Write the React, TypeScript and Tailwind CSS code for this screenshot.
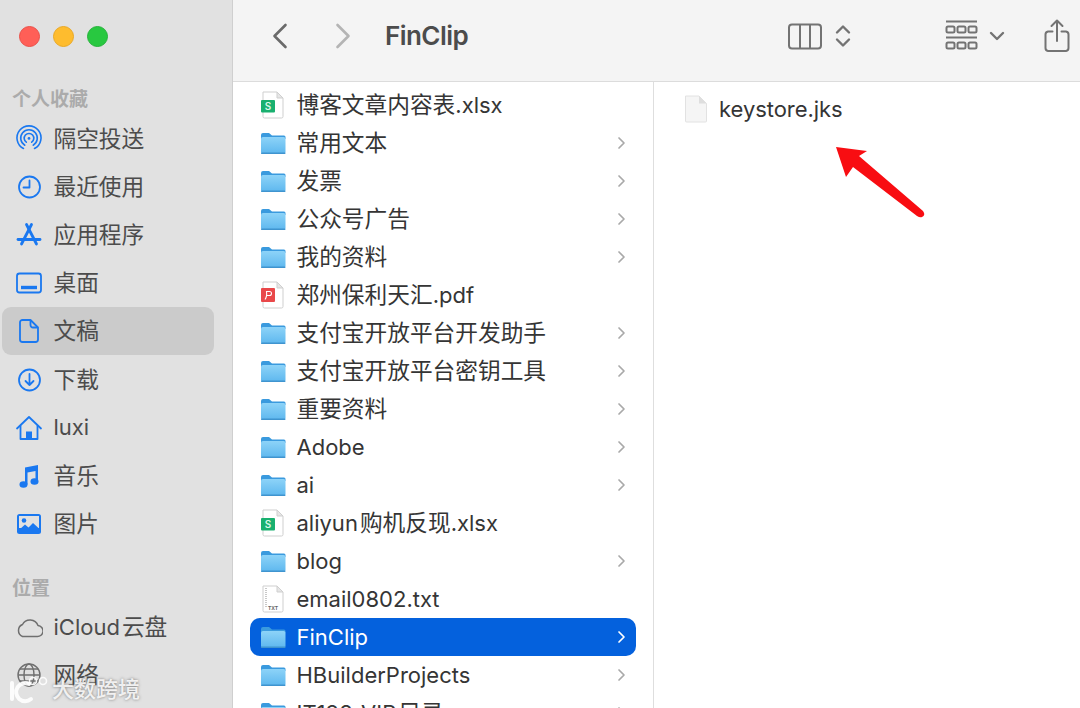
import React from "react";

const font = { fontFamily: '"Inter","Noto Sans CJK SC",sans-serif' };

const B = "#1a78f0";

function Txt({ s }: { s: string }) {
  const parts = s.split(/([\u4e00-\u9fff]+)/).filter(Boolean);
  return (
    <>
      {parts.map((p, i) =>
        /[\u4e00-\u9fff]/.test(p) ? (
          <span key={i} className={`text-[22.7px] ${i > 0 ? "ml-[2px]" : ""}`}>{p}</span>
        ) : (
          <span key={i}>{p}</span>
        )
      )}
    </>
  );
}

const sideIcons: Record<string, React.ReactNode> = {
  air: (
    <g fill="none" stroke={B} strokeWidth="1.6" strokeLinecap="round">
      <path d="M8.5 23.5A12 12 0 1 1 19.5 23.5" />
      <path d="M9.8 20.2A8.3 8.3 0 1 1 18.2 20.2" />
      <path d="M11.3 17.2A4.8 4.8 0 1 1 16.7 17.2" />
      <circle cx="14" cy="13.4" r="1.4" fill={B} stroke="none" />
    </g>
  ),
  clock: (
    <g fill="none" stroke={B} strokeWidth="1.8" strokeLinecap="round" strokeLinejoin="round">
      <circle cx="14.5" cy="14" r="10.5" />
      <path d="M14.5 7.5V14.5H8.5" />
    </g>
  ),
  app: (
    <g fill="none" stroke={B} strokeWidth="2.8" strokeLinecap="round" strokeLinejoin="round">
      <path d="M11.5 3.5L21.5 23" />
      <path d="M16.5 3.5L6.5 23" />
      <path d="M3 18.5H25" />
    </g>
  ),
  desk: (
    <g fill="none" stroke={B} strokeWidth="1.8">
      <rect x="2" y="4.5" width="24" height="19" rx="2.5" />
      <path d="M6 18.5H22" strokeWidth="3.4" />
    </g>
  ),
  doc: (
    <g fill="none" stroke={B} strokeWidth="1.8" strokeLinejoin="round">
      <path d="M7.5 3H15.5L23 10.500V22.500A2.500 2.500 0 0 1 20.500 25H7.500A2.500 2.500 0 0 1 5 22.500V5.500A2.500 2.500 0 0 1 7.500 3Z" />
      <path d="M15.500 3V8A2.500 2.500 0 0 0 18 10.500H23" />
    </g>
  ),
  down: (
    <g fill="none" stroke={B} strokeWidth="1.8" strokeLinecap="round" strokeLinejoin="round">
      <circle cx="14.500" cy="14" r="10.500" />
      <path d="M14.500 8V19M10.500 15L14.500 19L18.500 15" />
    </g>
  ),
  home: (
    <g fill="none" stroke={B} strokeWidth="1.800" strokeLinecap="round" strokeLinejoin="round">
      <path d="M2 14.500L14 3L26 14.500" />
      <path d="M5.500 12V25H22.500V12" />
      <rect x="11" y="17.500" width="6" height="7.500" fill={B} stroke="none" />
    </g>
  ),
  music: (
    <g fill={B}>
      <path d="M10 5.500L23 3V19H20.500V9L12.500 10.500V22.500H10Z" />
      <ellipse cx="8.500" cy="22.500" rx="4" ry="3.300" />
      <ellipse cx="19.500" cy="19.500" rx="4" ry="3.300" />
    </g>
  ),
  pic: (
    <g>
      <rect x="2" y="4" width="24" height="20" rx="2.500" fill={B} />
      <rect x="4" y="6" width="20" height="12" fill="#e1e1e1" />
      <circle cx="9" cy="10.500" r="2.300" fill={B} />
      <path d="M4 20L10 14.500L13.500 17.500L18 13L24 18.500V22H4Z" fill={B} />
    </g>
  ),
  cloud: (
    <path d="M7.500 23.500H22A5.500 5.500 0 0 0 23 12.500A8.500 8.500 0 0 0 7.500 11.500A6.500 6.500 0 0 0 7.500 23.500Z" fill="none" stroke="#6f6f6f" strokeWidth="1.500" strokeLinejoin="round" />
  ),
  globe: (
    <g fill="none" stroke="#6f6f6f" strokeWidth="1.400">
      <circle cx="14" cy="14" r="11" />
      <ellipse cx="14" cy="14" rx="5" ry="11" />
      <path d="M3 14H25M5 8H23M5 20H23" />
    </g>
  ),
};

function Side({ icon, label, active }: { icon: string; label: string; active?: boolean }) {
  return (
    <div className={`mx-[2px] flex h-[48.2px] w-[212px] items-center gap-[10.500px] rounded-[9px] pl-[13px] text-[22px] text-[#4c4c4c] ${active ? "bg-[#cbcbcb]" : ""}`}>
      <svg width="28" height="28" viewBox="0 0 28 28" className="shrink-0">{sideIcons[icon]}</svg>
      <span className="whitespace-nowrap"><Txt s={label} /></span>
    </div>
  );
}

function Folder({ id }: { id: string }) {
  return (
    <svg width="26" height="24" viewBox="0 0 26 24" className="shrink-0">
      <defs>
        <linearGradient id={id} x1="0" y1="0" x2="0" y2="1">
          <stop offset="0" stopColor="#8dd3f8" />
          <stop offset="1" stopColor="#5db7ee" />
        </linearGradient>
      </defs>
      <path d="M1 4A2 2 0 0 1 3 2H9L12 4.500H24A1.500 1.500 0 0 1 25.500 6V8H1Z" fill="#3a9ade" />
      <rect x="1" y="6" width="24.500" height="17" rx="2" fill={`url(#${id})`} />
      <rect x="1" y="21.500" width="24.500" height="1.500" rx=".7" fill="#3f94cf" />
    </svg>
  );
}

function PageShell({ children }: { children?: React.ReactNode }) {
  return (
    <svg width="26" height="28" viewBox="0 0 26 28" className="shrink-0">
      <path d="M3 1H17L23 7V25.500A1.500 1.500 0 0 1 21.500 27H4.500A1.500 1.500 0 0 1 3 25.500Z" fill="#fff" stroke="#cfcfcf" />
      <path d="M17 1V7H23Z" fill="#e6e6e6" stroke="#cfcfcf" strokeLinejoin="round" />
      {children}
    </svg>
  );
}

function FileIcon({ kind }: { kind: string }) {
  if (kind === "xlsx")
    return (
      <PageShell>
        <rect x="1" y="9" width="14" height="12.500" rx="1" fill="#19b06f" />
        <text x="8" y="19" textAnchor="middle" fontSize="10" fontWeight="600" fill="#d9f7e8" fontFamily="Inter">S</text>
      </PageShell>
    );
  if (kind === "pdf")
    return (
      <PageShell>
        <rect x="1" y="7" width="14" height="14" rx="1" fill="#e9484a" />
        <path d="M5 18.500C6.500 16.500 7 14 6.500 10.500H9.500A2 2 0 0 1 9.500 14.500H6.500" fill="none" stroke="#fff" strokeWidth="1.100" />
      </PageShell>
    );
  return (
    <PageShell>
      <path d="M6 3V22" stroke="#c8c8c8" strokeWidth="2" strokeDasharray="1 1" />
      <text x="13" y="25" textAnchor="middle" fontSize="5" fontWeight="700" fill="#666" fontFamily="Inter">TXT</text>
    </PageShell>
  );
}

const rows: [string, string][] = [
  ["博客文章内容表.xlsx", "xlsx"],
  ["常用文本", "folder"],
  ["发票", "folder"],
  ["公众号广告", "folder"],
  ["我的资料", "folder"],
  ["郑州保利天汇.pdf", "pdf"],
  ["支付宝开放平台开发助手", "folder"],
  ["支付宝开放平台密钥工具", "folder"],
  ["重要资料", "folder"],
  ["Adobe", "folder"],
  ["ai", "folder"],
  ["aliyun购机反现.xlsx", "xlsx"],
  ["blog", "folder"],
  ["email0802.txt", "txt"],
  ["FinClip", "folder"],
  ["HBuilderProjects", "folder"],
  ["IT198_VIP目录", "folder"],
];

export default function App() {
  return (
    <div className="relative flex h-[708px] w-[1080px] overflow-hidden bg-white" style={font}>
      {/* sidebar */}
      <aside className="flex h-full w-[233px] shrink-0 flex-col border-r border-[#cfcfcf] bg-[#e1e1e1]">
        <div className="flex h-[72px] shrink-0 items-center gap-[13px] pl-[19px]">
          <div className="h-[21px] w-[21px] rounded-full border border-[#ea4f48] bg-[#ff5f57]" />
          <div className="h-[21px] w-[21px] rounded-full border border-[#e9a825] bg-[#febc2e]" />
          <div className="h-[21px] w-[21px] rounded-full border border-[#25b33a] bg-[#28c840]" />
        </div>
        <div className="mt-[15px] mb-[1.500px] flex h-[26px] shrink-0 items-center pl-[12px] text-[19px] font-semibold text-[#ababab]">个人收藏</div>
        <Side icon="air" label="隔空投送" />
        <Side icon="clock" label="最近使用" />
        <Side icon="app" label="应用程序" />
        <Side icon="desk" label="桌面" />
        <Side icon="doc" label="文稿" active />
        <Side icon="down" label="下载" />
        <Side icon="home" label="luxi" />
        <Side icon="music" label="音乐" />
        <Side icon="pic" label="图片" />
        <div className="mt-[28px] mb-[1px] flex h-[26px] shrink-0 items-center pl-[12px] text-[19px] font-semibold text-[#ababab]">位置</div>
        <Side icon="cloud" label="iCloud云盘" />
        <Side icon="globe" label="网络" />
      </aside>

      {/* main */}
      <div className="flex min-w-0 flex-1 flex-col">
        <header className="flex h-[82px] shrink-0 items-center border-b border-[#dcdcdc] bg-[#f4f4f4] pb-[9px]">
          <svg width="16" height="26" viewBox="0 0 16 26" className="ml-[39px] shrink-0" fill="none" stroke="#6a6a6a" strokeWidth="2.600" strokeLinecap="round" strokeLinejoin="round">
            <path d="M13.500 2L2.500 13L13.500 24" />
          </svg>
          <svg width="16" height="26" viewBox="0 0 16 26" className="ml-[47px] shrink-0" fill="none" stroke="#b4b4b4" strokeWidth="2.600" strokeLinecap="round" strokeLinejoin="round">
            <path d="M2.500 2L13.500 13L2.500 24" />
          </svg>
          <span className="ml-[34px] w-[403px] shrink-0 text-[26px] leading-none font-semibold tracking-[-0.55px] text-[#4c4c4c]">FinClip</span>
          <svg width="34" height="27" viewBox="0 0 34 27" className="shrink-0" fill="none" stroke="#737373" strokeWidth="2">
            <rect x="1" y="1.500" width="32" height="24" rx="3" />
            <path d="M12 1.500V25.500M22 1.500V25.500" />
          </svg>
          <svg width="16" height="26" viewBox="0 0 16 26" className="ml-[13px] shrink-0" fill="none" stroke="#737373" strokeWidth="2.400" strokeLinecap="round" strokeLinejoin="round">
            <path d="M2 9.500L8 3.500L14 9.500M2 16.500L8 22.500L14 16.500" />
          </svg>
          <svg width="33" height="32" viewBox="0 0 33 32" className="ml-[94px] shrink-0" fill="none" stroke="#737373" strokeWidth="2">
            <path d="M1 1.500H32M1 17.500H32" />
            <rect x="1.500" y="6.500" width="8" height="6" rx="1.500" />
            <rect x="12.500" y="6.500" width="8" height="6" rx="1.500" />
            <rect x="23.500" y="6.500" width="8" height="6" rx="1.500" />
            <rect x="1.500" y="22.500" width="8" height="6" rx="1.500" />
            <rect x="12.500" y="22.500" width="8" height="6" rx="1.500" />
            <rect x="23.500" y="22.500" width="8" height="6" rx="1.500" />
          </svg>
          <svg width="16" height="10" viewBox="0 0 16 10" className="ml-[11px] shrink-0" fill="none" stroke="#737373" strokeWidth="2.400" strokeLinecap="round" strokeLinejoin="round">
            <path d="M2 2L8 8L14 2" />
          </svg>
          <svg width="26" height="34" viewBox="0 0 26 34" className="ml-[39px] shrink-0" fill="none" stroke="#737373" strokeWidth="2" strokeLinecap="round" strokeLinejoin="round">
            <path d="M8.500 12.500H4A3 3 0 0 0 1.500 15.500V29A3 3 0 0 0 4 32H22A3 3 0 0 0 24.500 29V15.500A3 3 0 0 0 22 12.500H17.500" />
            <path d="M13 22V2M7.500 7L13 1.500L18.500 7" />
          </svg>
        </header>
        <div className="flex min-h-0 flex-1">
          <div className="flex w-[421px] shrink-0 flex-col border-r border-[#dedede] px-[17px] pt-[4px]">
            {rows.map(([name, kind], i) => {
              const sel = name === "FinClip";
              return (
                <div key={name} className={`flex h-[38px] shrink-0 items-center rounded-[10px] pr-[10px] pl-[10px] text-[22px] ${sel ? "bg-[#0461dd] text-white" : "text-[#353535]"}`}>
                  <div className="flex w-[26px] shrink-0 justify-center">
                    {kind === "folder" ? <Folder id={`f${i}`} /> : <FileIcon kind={kind} />}
                  </div>
                  <span className="ml-[10.500px] flex-1 whitespace-nowrap"><Txt s={name} /></span>
                  {kind === "folder" && (
                    <svg width="9" height="14" viewBox="0 0 9 14" fill="none" stroke={sel ? "#ffffff" : "#a9a9a9"} strokeWidth="1.700" strokeLinecap="round" strokeLinejoin="round">
                      <path d="M2 2L7 7L2 12" />
                    </svg>
                  )}
                </div>
              );
            })}
          </div>
          <div className="flex-1 pt-[8px] pl-[30px]">
            <div className="flex h-[38px] items-center gap-[11px] text-[22px] tracking-[-0.05px] text-[#353535]">
              <svg width="24" height="28" viewBox="0 0 24 28" className="shrink-0">
                <path d="M1.500 1H15L22.500 8.500V26A1 1 0 0 1 21.500 27H2.500A1 1 0 0 1 1.500 26Z" fill="#f5f5f5" stroke="#e2e2e2" />
                <path d="M15 1V8.500H22.500Z" fill="#dedede" />
              </svg>
              <span>keystore.jks</span>
            </div>
          </div>
        </div>
      </div>

      {/* red annotation arrow */}
      <svg className="absolute top-[140px] left-[830px]" width="100" height="85" viewBox="830 140 100 85">
        <path d="M836 147L867 151L859 156L923 211Q926 215 922 217Q920 218 917 216L853 167L846 177Z" fill="#f80d12" />
      </svg>

      {/* watermark */}
      <div className="absolute top-[674px] left-[9px] flex items-center gap-[3px] text-[22px] leading-none font-medium text-white/85 [text-shadow:0_0_3px_rgba(70,70,70,0.7)]">
        <svg width="40" height="30" viewBox="0 0 40 30" fill="none" stroke="#ffffff" strokeOpacity=".9" strokeWidth="4" strokeLinecap="round">
          <path d="M3 9V25" />
          <path d="M20 10A9 9 0 1 0 22 25" />
          <circle cx="24" cy="7" r="3.500" strokeWidth="1.600" />
          <circle cx="34" cy="7" r="3.500" strokeWidth="1.600" />
        </svg>
        <span>大数跨境</span>
      </div>
    </div>
  );
}
